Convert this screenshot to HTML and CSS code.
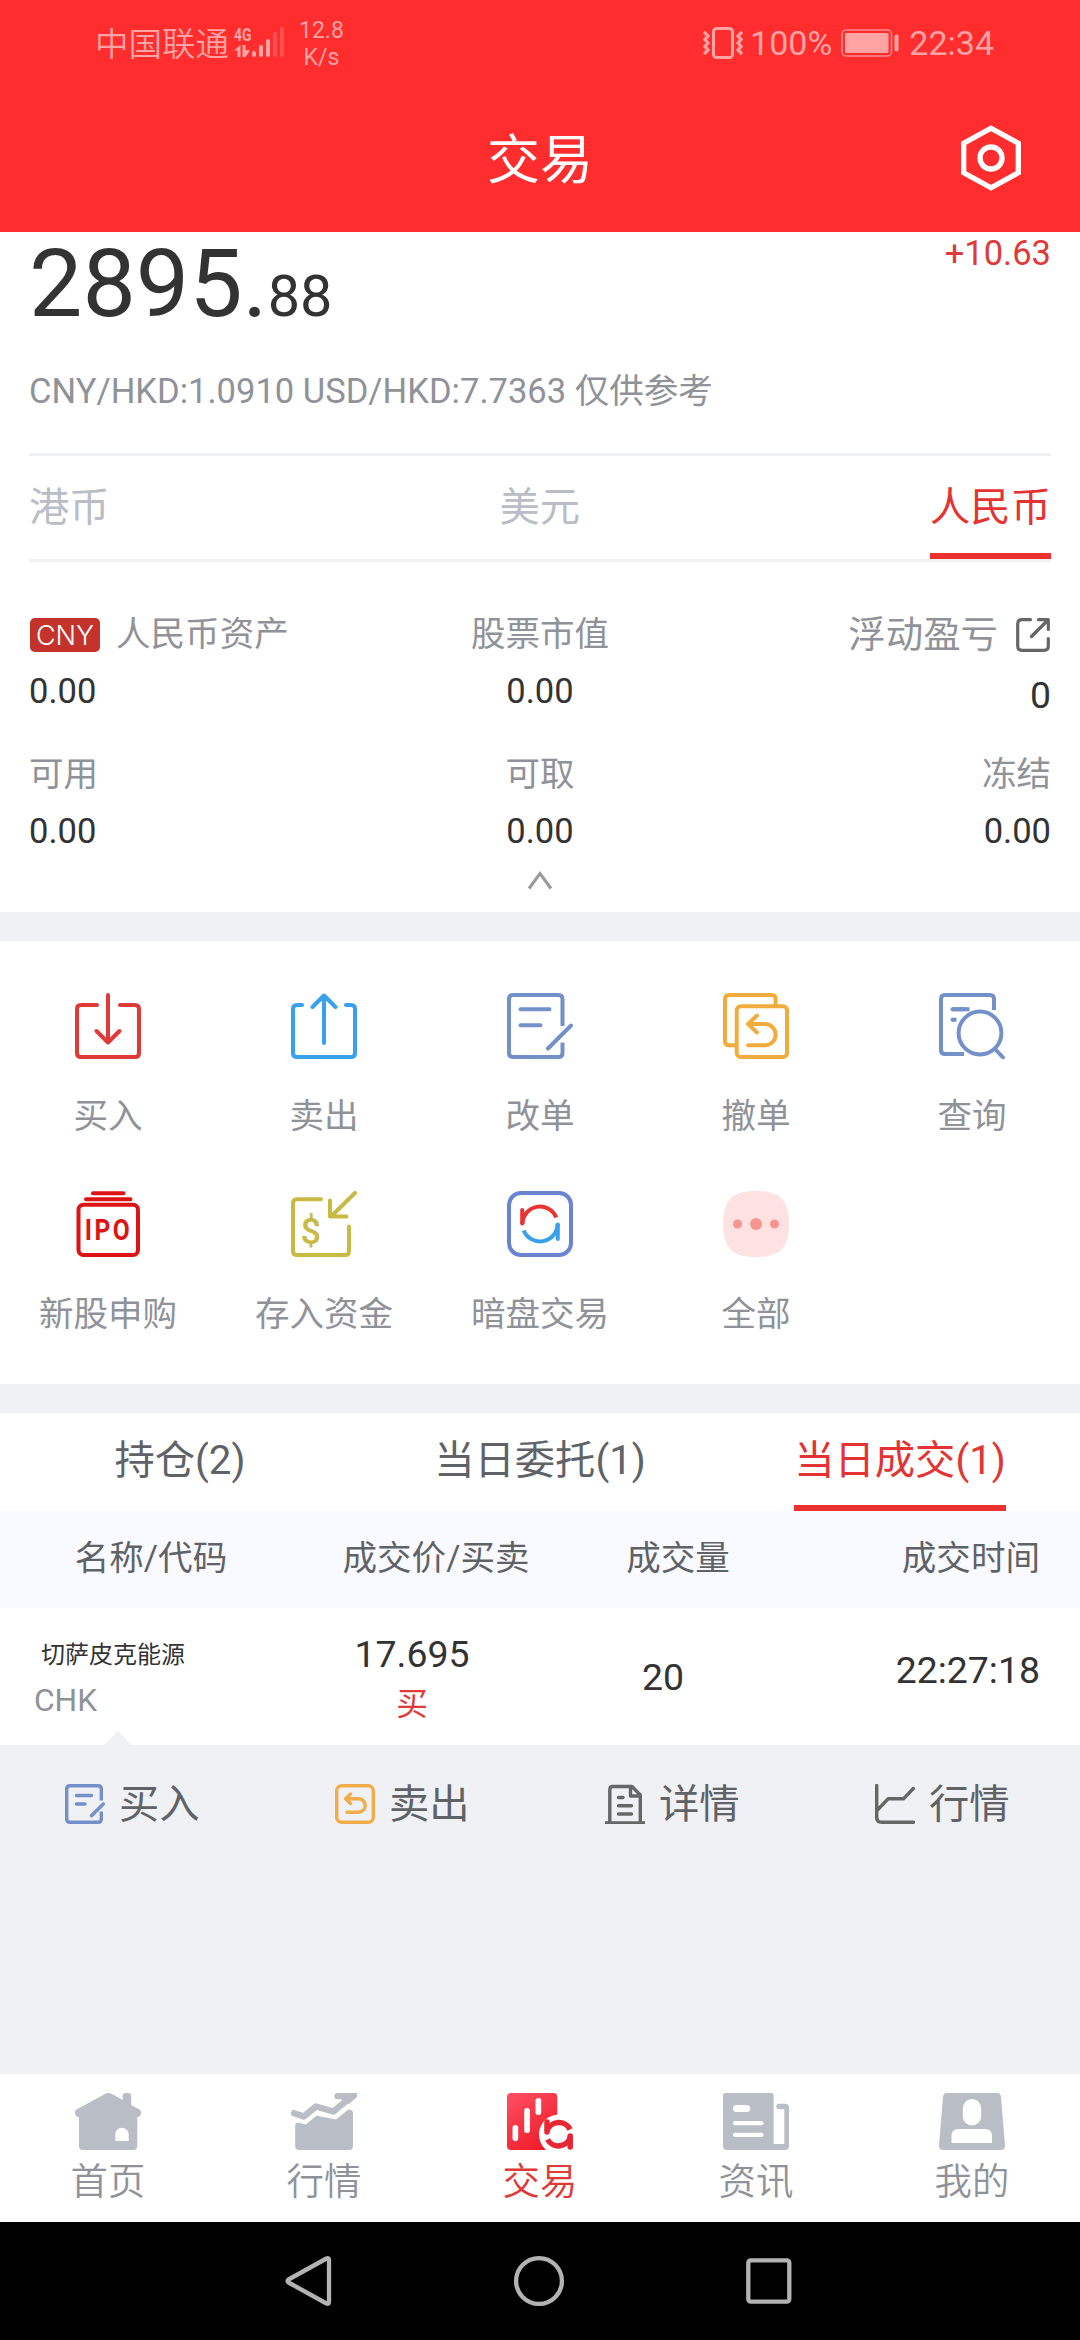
FILE: index.html
```html
<!DOCTYPE html>
<html lang="zh-CN">
<head>
<meta charset="utf-8">
<title>交易</title>
<link rel="stylesheet" href="styles.css">
</head>
<body>
<header class="header">
  <div class="status">
    <span class="carrier">中国联通</span>
    <svg class="signal" width="52" height="46" viewBox="0 -6 52 46">
      <text x="0" y="14.500" class="net" textLength="17.500" lengthAdjust="spacingAndGlyphs">4G</text>
      <path d="M0 24.500L6.500 19V31H3.500V24.500ZM8.500 19H11.500V24L16 24.500L11.500 31H8.500Z" fill="currentColor"/>
      <g stroke="currentColor" stroke-width="4" stroke-linecap="round"><path d="M20 27v2M27 21v8M34 15v14"/><path d="M41 8v21M48 3v26" opacity=".3"/></g>
    </svg>
    <span class="speed">12.8<br>K/s</span>
    <span class="spacer"></span>
    <svg class="vibrate" width="40" height="32" viewBox="0 0 40 32" fill="none" stroke="currentColor" stroke-width="3">
      <rect x="10.500" y="1.500" width="19" height="29" rx="3"/>
      <path d="M1 5l4 4-3 3.500 3 3.500-3 3.500 3 3.500-4 4M39 5l-4 4 3 3.500-3 3.500 3 3.500-3 3.500 4 4" stroke-width="3.200"/>
    </svg>
    <span class="percent">100%</span>
    <svg class="battery" width="58" height="28" viewBox="0 0 58 28">
      <rect x="1" y="1" width="49.500" height="26" rx="4" fill="none" stroke="currentColor" stroke-width="1.500" opacity=".8"/>
      <rect x="4" y="4" width="43.500" height="20" rx="1" fill="currentColor"/>
      <rect x="53.500" y="5.500" width="4" height="17" rx="2" fill="currentColor"/>
    </svg>
    <span class="clock">22:34</span>
  </div>
  <div class="titlebar">
    <h1 class="title">交易</h1>
    <svg class="settings" width="60" height="66" viewBox="0 0 60 66" fill="none" stroke="#fff" stroke-width="5.300">
      <path d="M30 3.300L57.300 18.300V47.700L30 62.700L2.700 47.700V18.300Z"/><circle cx="30" cy="33" r="11"/>
    </svg>
  </div>
</header>

<section class="account">
  <div class="total">
    <div class="amount">2895.<span class="cents">88</span></div>
    <div class="change">+10.63</div>
  </div>
  <div class="rate">CNY/HKD:1.0910 USD/HKD:7.7363 仅供参考</div>
  <nav class="currency">
    <span>港币</span><span>美元</span><span class="on">人民币</span>
  </nav>
  <div class="figures">
    <div class="fig start"><div class="label"><span class="badge">CNY</span>人民币资产</div><div class="value">0.00</div></div>
    <div class="fig mid"><div class="label">股票市值</div><div class="value">0.00</div></div>
    <div class="fig end large"><div class="label">浮动盈亏<svg class="open" width="34" height="34" viewBox="0 0 34 34" fill="none" stroke="#666" stroke-width="3.200" stroke-linecap="round" stroke-linejoin="round"><path d="M14.500 1.700H6Q1.700 1.700 1.700 6V28Q1.700 32.300 6 32.300H28Q32.300 32.300 32.300 28V20.500M15.500 18.500L32 2M22.500 1.700H32.300V11.500"/></svg></div><div class="value">0</div></div>
    <div class="fig start"><div class="label">可用</div><div class="value">0.00</div></div>
    <div class="fig mid"><div class="label">可取</div><div class="value">0.00</div></div>
    <div class="fig end"><div class="label">冻结</div><div class="value">0.00</div></div>
  </div>
  <svg class="collapse" width="24" height="19" viewBox="0 0 24 19" fill="none" stroke="#999" stroke-width="3"><path d="M1 17.500L12 2.500L23 17.500"/></svg>
</section>

<section class="actions">
  <div class="action">
    <svg class="icon" viewBox="0 0 66 66" stroke="#e03a38"><path d="M22 12H6Q2 12 2 16V60Q2 64 6 64H60Q64 64 64 60V16Q64 12 60 12H45M33 2V49M21.500 38L33 49.500L44.500 38"/></svg>
    <span>买入</span>
  </div>
  <div class="action">
    <svg class="icon" viewBox="0 0 66 66" stroke="#38a0ec"><path d="M11 12H6Q2 12 2 16V60Q2 64 6 64H60Q64 64 64 60V16Q64 12 60 12H55M33 50V3M21.500 14L33 2.500L44.500 14"/></svg>
    <span>卖出</span>
  </div>
  <div class="action">
    <svg class="icon" viewBox="0 0 66 66" stroke="#7390c8"><path stroke-linecap="butt" d="M55.500 33V6Q55.500 2 51.500 2H6Q2 2 2 6V60Q2 64 6 64H51.500Q55.500 64 55.500 60V49.500"/><path d="M13.500 16.300H42.500M13.500 32.300H33.500M41 55.500L64 32.500"/></svg>
    <span>改单</span>
  </div>
  <div class="action">
    <svg class="icon" viewBox="0 0 66 66" stroke="#f2ac3e"><path stroke-linecap="butt" d="M52.600 13V6Q52.600 2 48.600 2H6Q2 2 2 6V48.300Q2 52.300 6 52.300H13"/><rect x="13.700" y="13.300" width="50.300" height="50.700" rx="4"/><path d="M34 22.500L25 31L34 39.500M25 31H42a10.650 10.650 0 0 1 0 21.300H25"/></svg>
    <span>撤单</span>
  </div>
  <div class="action">
    <svg class="icon" viewBox="0 0 66 66" stroke="#7390c8"><path stroke-linecap="butt" d="M55 17V6Q55 2 51 2H6Q2 2 2 6V57Q2 61 6 61H25M30.500 16.300H13.500M17.500 26.700H13.500"/><path d="M13.500 16.300H26M13.500 26.700H14"/><circle cx="41" cy="40" r="21.400"/><path d="M56 56L64 64.500"/></svg>
    <span>查询</span>
  </div>
  <div class="action">
    <svg class="icon" viewBox="0 0 66 66" stroke="#dc1414"><path d="M18 2.200H48.500M11 8.200H55.500"/><rect x="3.500" y="13.700" width="59.500" height="50.300" rx="5"/><text class="ipo" transform="translate(9.800 48.500) scale(.82 1)" stroke="none" fill="#dc1414">IPO</text></svg>
    <span>新股申购</span>
  </div>
  <div class="action">
    <svg class="icon" viewBox="0 0 66 66" stroke="#c9b945"><path d="M30 8.300H6Q2 8.300 2 12.300V60Q2 64 6 64H54Q58 64 58 60V35.500M64 2L40 25.500M39 9.500V25.500H55.500"/><text class="dollar" x="9.500" y="53" stroke="none" fill="#c9b945">$</text></svg>
    <span>存入资金</span>
  </div>
  <div class="action">
    <svg class="icon" viewBox="0 0 66 66" stroke="#6a84d2"><rect x="2" y="2" width="62" height="62" rx="12"/><path stroke="#e93434" stroke-linecap="butt" d="M15.400 33A17.600 17.600 0 0 1 49.300 26.500"/><path stroke="#e93434" d="M15.200 19V32.500"/><path stroke="#38a0ec" stroke-linecap="butt" d="M50.600 33A17.600 17.600 0 0 1 16.700 39.500"/><path stroke="#38a0ec" d="M50.800 33.500V48"/></svg>
    <span>暗盘交易</span>
  </div>
  <div class="action">
    <svg class="icon" viewBox="0 0 66 66"><path fill="#fee1e1" d="M33 0C57 0 66 9 66 33S57 66 33 66S0 57 0 33S9 0 33 0Z"/><g fill="#f69492"><circle cx="14.500" cy="33" r="4.500"/><circle cx="33" cy="33" r="6"/><circle cx="51.500" cy="33" r="4.500"/></g></svg>
    <span>全部</span>
  </div>
</section>

<section class="trades">
  <nav class="tabs"><div><span>持仓(2)</span></div><div><span>当日委托(1)</span></div><div><span class="on">当日成交(1)</span></div></nav>
  <div class="thead"><span>名称/代码</span><span>成交价/买卖</span><span>成交量</span><span>成交时间</span></div>
  <div class="row">
    <div class="stock"><div class="name">切萨皮克能源</div><div class="code">CHK</div></div>
    <div class="price"><div>17.695</div><div class="side">买</div></div>
    <div class="qty">20</div>
    <div class="time">22:27:18</div>
    <i class="pointer"></i>
  </div>
  <div class="ops">
    <div class="op"><svg class="mini" viewBox="0 0 40 40" stroke="#7390c8"><path stroke-linecap="butt" d="M36.300 16.500V5Q36.300 1.700 33 1.700H5Q1.700 1.700 1.700 5V35Q1.700 38.300 5 38.300H33Q36.300 38.300 36.300 35V27.500"/><path d="M11.500 11.500H26.500M11.500 20H20M26.500 31.700L38.300 20"/></svg>买入</div>
    <div class="op"><svg class="mini" viewBox="0 0 40 40" stroke="#f2ac4a"><rect x="1.700" y="1.700" width="36.600" height="36.600" rx="5"/><path d="M15.500 10L10.500 14.800L15.500 19.500M10.500 14.800H23.500a6.750 6.750 0 0 1 0 13.500H12"/></svg>卖出</div>
    <div class="op"><svg class="mini" viewBox="0 0 40 40" stroke="#666"><path stroke-linecap="butt" d="M0 39H40M4.800 38V5.500Q4.800 2.500 7.800 2.500H27L35.300 11V38M25.500 3V12H35"/><path d="M13.500 13.500H18M13.500 21.700H26.500M13.500 30H26.500"/></svg>详情</div>
    <div class="op"><svg class="mini" viewBox="0 0 40 40" stroke="#666"><path d="M1.700 1.500V33.500Q1.700 38.300 6.500 38.300H38.500M2.500 26L13 14.800H28.500L38.300 4.500"/></svg>行情</div>
  </div>
</section>

<nav class="tabbar">
  <div class="tab"><svg class="glyph" viewBox="0 0 66 57"><path d="M30 1Q33.400-1 37 1L47.700 7V3q0-3 3-3h2.500q3 0 3 3V12L64.500 16.500Q66 17.500 66 19.500Q66 24 62.300 24V53q0 4-4 4H8q-4 0-4-4V24Q0 24 0 19.500Q0 17.500 1.500 16.500Z"/><path fill="#fff" d="M40.300 48V41.500a6.700 6.700 0 0 1 13.400 0V48Z"/></svg><span>首页</span></div>
  <div class="tab"><svg class="glyph" viewBox="0 0 66 57"><path fill="none" stroke="#b9bdc5" stroke-width="6.500" stroke-linecap="round" stroke-linejoin="round" d="M3.200 20.200L12.700 23.500L25 13.500L42.400 18.500L60 4"/><path d="M46.500 0H66V4L58 11L50 6.300H46.500Q43.300 6.300 43.300 3.200T46.500 0Z"/><path d="M4.200 33Q4.200 29.700 7.500 29.700L14.700 31.500L25.500 22.800L45 26.500L57 16.800Q62 16 62 20V53q0 4-4 4H8.200q-4 0-4-4Z"/></svg><span>行情</span></div>
  <div class="tab on"><svg class="glyph" viewBox="0 0 66 57">
    <defs><linearGradient id="hot" x1="0" y1="0" x2=".6" y2="1"><stop offset="0" stop-color="#ff5064"/><stop offset="1" stop-color="#f01e2c"/></linearGradient></defs>
    <path fill="url(#hot)" d="M4 0H46.500Q50.300 0 50.300 4V57H4Q0 57 0 53V4Q0 0 4 0Z"/>
    <g fill="#fff"><rect x="5.500" y="32" width="5.700" height="16" rx="2.800"/><rect x="17.200" y="15" width="5.700" height="25" rx="2.800"/><rect x="28.500" y="5" width="5.700" height="17" rx="2.800"/><circle cx="52" cy="41.500" r="20"/></g>
    <g fill="none" stroke="#e82734" stroke-width="5.500"><path d="M40 38A12.500 12.500 0 0 1 63 36.500"/><path d="M63.500 43.500A12.500 12.500 0 0 1 40.500 46.500"/><path stroke-linecap="round" d="M40 29V39M63.200 43V54"/></g>
  </svg><span>交易</span></div>
  <div class="tab"><svg class="glyph" viewBox="0 0 66 57"><path d="M2 0H48.500Q50.600 0 50.600 2V51H61.300V16.300H56Q53.400 16.300 53.400 13.500T56 10.700H62Q66 10.700 66 14.700V53q0 4-4 4H4q-4 0-4-4V2Q0 0 2 0Z"/><g fill="#fff"><rect x="10" y="12" width="17.300" height="7" rx="3.500"/><rect x="10" y="28" width="30.500" height="4.300" rx="2.100"/><rect x="10" y="39.700" width="30.500" height="4.300" rx="2.100"/></g></svg><span>资讯</span></div>
  <div class="tab"><svg class="glyph" viewBox="0 0 66 57"><path d="M7.500 0H58.500Q61.500 0 62 4L66 52.500Q66 57 62 57H4Q0 57 0 52.500L4 4Q4.500 0 7.500 0Z"/><g fill="#fff"><rect x="23.900" y="6" width="18.200" height="26.500" rx="9.100"/><path d="M12.500 50V43Q12.500 36 19.500 36H46Q53 36 53 43V50Z"/></g></svg><span>我的</span></div>
</nav>

<footer class="sysnav">
  <svg class="sysicon" viewBox="0 0 52 52"><path d="M43.500 3.500Q46 2.500 46 5V47Q46 49.500 43.500 48.500L5.500 27.500Q3.500 26 5.500 24.500Z"/></svg>
  <svg class="sysicon" viewBox="0 0 52 52"><circle cx="26" cy="26" r="22.900"/></svg>
  <svg class="sysicon" viewBox="0 0 52 52"><rect x="5.300" y="5.300" width="41" height="41.400" rx="2.500"/></svg>
</footer>
</body>
</html>
```

FILE: styles.css
```css
* { box-sizing: border-box; }

body {
  margin: 0;
  width: 1080px;
  height: 2340px;
  display: flex;
  flex-direction: column;
  overflow: hidden;
  background: #f0f1f5;
  color: #333;
  font-family: Roboto, "Noto Sans CJK SC", sans-serif;
  font-size: 34.560px;
  font-weight: 400;
  line-height: 46px;
}

svg { display: block; flex: none; }

/* header */
.header { height: 232px; background: #ff2d2d; }

.status {
  height: 86px;
  padding: 0 86px 0 95px;
  display: flex;
  align-items: center;
  color: #ffa3a3;
  font-size: 34px;
}
.carrier { padding-top: 4px; font-size: 33.500px; font-weight: 350; }
.signal { margin: -1px 0 0 5px; }
.net { font: 700 19px Roboto, sans-serif; fill: currentColor; }
.speed { margin: 2px 0 0 13px; font-size: 23px; line-height: 27px; text-align: center; }
.spacer { flex: 1; }
.vibrate { margin-right: 7px; }
.battery { margin: 0 10px 0 9px; }

.titlebar {
  height: 146px;
  padding: 0 59px;
  display: grid;
  grid-template-columns: 60px 1fr 60px;
  align-items: start;
}
.title {
  grid-column: 2;
  margin: 43px 0 0;
  color: #fff;
  font-size: 53px;
  font-weight: 400;
  line-height: 64px;
  text-align: center;
}
.settings { margin-top: 39px; }

/* account */
.account { height: 680px; padding: 0 29px; background: #fff; }
.total { display: flex; justify-content: space-between; height: 103px; }
.amount { font-size: 95px; line-height: 103px; }
.cents { font-size: 57.600px; }
.change { color: #e03a38; line-height: 42px; }
.rate { margin-top: 33px; color: #8f9298; }

.currency {
  margin-top: 39px;
  height: 109px;
  border: solid #f0f1f5;
  border-width: 3px 0;
  display: flex;
  justify-content: space-between;
  color: #b9bdc5;
  font-size: 40.320px;
  line-height: 103px;
}
.currency .on { color: #e53232; box-shadow: inset 0 -6px #ec3030; }
.currency span:nth-child(2) { padding-left: 40px; }

.figures {
  padding-top: 49px;
  display: grid;
  grid-template-columns: 1fr 1fr 1fr;
  grid-template-rows: 103px 103px;
  row-gap: 37px;
}
.fig { display: flex; flex-direction: column; gap: 11px; }
.start { align-items: flex-start; }
.mid { align-items: center; }
.end { align-items: flex-end; }
.label { display: flex; align-items: center; color: #8f9298; }
.badge {
  width: 70px;
  height: 34px;
  margin: 1px 16px 0 1px;
  border-radius: 5px;
  background: #c3332c;
  color: #fff;
  font: 300 27px/35px Inter, "Liberation Sans", sans-serif;
  text-align: center;
}
.large { gap: 9px; font-size: 37.440px; line-height: 50px; }
.large .label { margin-top: -1px; }
.large .value { margin-top: 1px; }
.open { margin: 0 1px 0 18px; }
.collapse { margin: 17px auto 0; }

/* action grid */
.actions {
  height: 443px;
  margin-top: 29px;
  padding-top: 52px;
  background: #fff;
  display: grid;
  grid-template-columns: repeat(5, 1fr);
  grid-template-rows: 198px 198px;
}
.action {
  display: flex;
  flex-direction: column;
  align-items: center;
  gap: 34px;
  color: #8f9298;
}
.icon { width: 66px; height: 66px; }
.icon, .mini { fill: none; stroke-width: 4px; stroke-linecap: round; stroke-linejoin: round; }
.ipo { font: 700 30px Roboto, sans-serif; letter-spacing: 3px; }
.dollar { font: 500 36px Roboto, sans-serif; }

/* trades */
.trades { margin-top: 29px; flex: 1; }
.tabs {
  height: 98px;
  background: #fff;
  display: grid;
  grid-template-columns: repeat(3, 1fr);
  text-align: center;
  color: #5f6266;
  font-size: 40.320px;
  line-height: 95px;
}
.tabs span { display: inline-block; height: 98px; }
.tabs .on { color: #e53232; box-shadow: inset 0 -6px #ec3030; }
.thead {
  height: 97px;
  padding: 0 40px 0 29px;
  background: #f9faff;
  display: grid;
  grid-template-columns: 244px 326px 158px 1fr;
  text-align: center;
  color: #5f6266;
  line-height: 95px;
}
.thead span:last-child { text-align: right; }

.row {
  position: relative;
  height: 137px;
  padding: 0 40px 0 34px;
  background: #fff;
  display: grid;
  grid-template-columns: 252px 252px 250px 1fr;
  font-size: 37.440px;
  line-height: 50px;
}
.name { margin: 29px 0 0 7px; font-size: 24px; line-height: 36px; }
.code { margin-top: 8px; color: #8f9298; font-size: 31.680px; line-height: 40px; }
.price { padding-top: 21px; text-align: center; }
.side { margin-top: 6px; color: #e03a38; font-size: 31.680px; line-height: 40px; }
.qty { padding-top: 44px; text-align: center; }
.time { padding-top: 37px; text-align: right; }
.pointer {
  position: absolute;
  left: 104px;
  bottom: 0;
  border: solid transparent;
  border-width: 0 14px 14px;
  border-bottom-color: #f0f1f5;
}

.ops {
  height: 118px;
  display: grid;
  grid-template-columns: repeat(4, 1fr);
  color: #5f6266;
  font-size: 40.320px;
  line-height: 50px;
}
.op { display: flex; align-items: center; gap: 14px; padding: 2px 0 0 65px; }
.mini { width: 40px; height: 40px; margin-top: -3px; stroke-width: 3.400px; }

/* bottom navigation */
.tabbar {
  height: 148px;
  padding-top: 19px;
  background: #fff;
  display: grid;
  grid-template-columns: repeat(5, 1fr);
  color: #8f9298;
  font-size: 37.440px;
  font-weight: 350;
  line-height: 50px;
}
.tab { display: flex; flex-direction: column; align-items: center; gap: 7px; }
.tab.on { color: #e03a38; }
.glyph { width: 66px; height: 57px; fill: #b9bdc5; }

.sysnav {
  height: 118px;
  padding: 0 285px 0 283px;
  background: #000;
  display: flex;
  align-items: center;
  justify-content: space-between;
}
.sysicon { width: 52px; height: 52px; fill: none; stroke: #b3b3b3; stroke-width: 4.300px; stroke-linejoin: round; }
```
